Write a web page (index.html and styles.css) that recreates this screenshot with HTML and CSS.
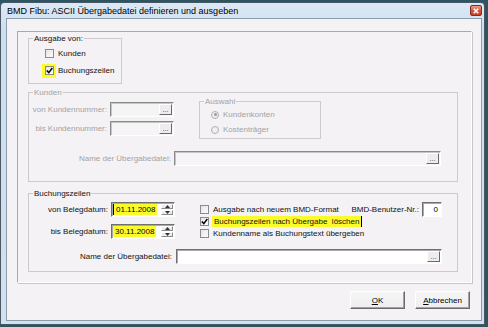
FILE: index.html
```html
<!DOCTYPE html>
<html lang="de">
<head>
    <meta charset="UTF-8">
    <title>BMD Fibu: ASCII Übergabedatei definieren und ausgeben</title>
    <link rel="stylesheet" href="styles.css">
</head>
<body>
    <div class="window">
        <div class="titlebar">
            <span class="title">BMD Fibu: ASCII Übergabedatei definieren und ausgeben</span>
            <span class="close-btn">
                <svg width="6" height="6" viewBox="0 0 6 6"><path d="M0.8 0.8 L5.2 5.2 M5.2 0.8 L0.8 5.2" stroke="#fff" stroke-width="1.6"/></svg>
            </span>
        </div>

        <div class="client">
            <div class="panel">

                <!-- Ausgabe von -->
                <fieldset class="group group-ausgabe">
                    <legend>Ausgabe von:</legend>
                    <div class="ausgabe-rows">
                        <div class="check-row tall">
                            <span class="cb-wrap"><span class="checkbox"></span></span>
                            <span class="check-label">Kunden</span>
                        </div>
                        <div class="check-row tall">
                            <span class="cb-wrap marked">
                                <span class="checkbox">
                                    <svg width="7" height="7" viewBox="0 0 7 7"><path d="M0.8 3.4 L2.8 5.6 L6.3 1" fill="none" stroke="#000" stroke-width="1.5"/></svg>
                                </span>
                            </span>
                            <span class="check-label">Buchungszeilen</span>
                        </div>
                    </div>
                </fieldset>

                <!-- Kunden (disabled) -->
                <fieldset class="group group-wide group-kunden disabled">
                    <legend>Kunden</legend>
                    <div class="kunden-top">
                        <div class="field-col kunden-fields">
                            <div class="field-row">
                                <label class="field-label w-kunde">von Kundennummer:</label>
                                <span class="input input-short"><span class="input-text"></span><span class="dots-btn">...</span></span>
                            </div>
                            <div class="field-row">
                                <label class="field-label w-kunde">bis Kundennummer:</label>
                                <span class="input input-short"><span class="input-text"></span><span class="dots-btn">...</span></span>
                            </div>
                        </div>
                        <fieldset class="group group-auswahl">
                            <legend>Auswahl</legend>
                            <div class="radio-rows">
                                <div class="radio-row"><span class="radio checked"></span><span>Kundenkonten</span></div>
                                <div class="radio-row"><span class="radio"></span><span>Kostenträger</span></div>
                            </div>
                        </fieldset>
                    </div>
                    <div class="field-row name-row kunden-name">
                        <label class="field-label w-name">Name der Übergabedatei:</label>
                        <span class="input input-long"><span class="input-text"></span><span class="dots-btn">...</span></span>
                    </div>
                </fieldset>

                <!-- Buchungszeilen -->
                <fieldset class="group group-wide group-buchung">
                    <legend>Buchungszeilen</legend>
                    <div class="buchung-top">
                        <div class="field-col date-fields">
                            <div class="field-row">
                                <label class="field-label w-datum">von Belegdatum:</label>
                                <span class="input input-short">
                                    <span class="input-text"><span class="hl caret-left">01.11.2008</span></span>
                                    <span class="spin">
                                        <span class="spin-half"><svg width="5" height="3" viewBox="0 0 5 3"><path d="M0 3 L2.5 0 L5 3 Z" fill="#333"/></svg></span>
                                        <span class="spin-half"><svg width="5" height="3" viewBox="0 0 5 3"><path d="M0 0 L2.5 3 L5 0 Z" fill="#333"/></svg></span>
                                    </span>
                                </span>
                            </div>
                            <div class="field-row">
                                <label class="field-label w-datum">bis Belegdatum:</label>
                                <span class="input input-short">
                                    <span class="input-text"><span class="hl">30.11.2008</span></span>
                                    <span class="spin">
                                        <span class="spin-half"><svg width="5" height="3" viewBox="0 0 5 3"><path d="M0 3 L2.5 0 L5 3 Z" fill="#333"/></svg></span>
                                        <span class="spin-half"><svg width="5" height="3" viewBox="0 0 5 3"><path d="M0 0 L2.5 3 L5 0 Z" fill="#333"/></svg></span>
                                    </span>
                                </span>
                            </div>
                        </div>
                        <div class="check-col">
                            <div class="check-row">
                                <span class="checkbox"></span>
                                <span class="check-label">Ausgabe nach neuem BMD-Format</span>
                                <span class="benutzer">
                                    <label>BMD-Benutzer-Nr.:</label>
                                    <span class="input input-nr"><span class="input-text">0</span></span>
                                </span>
                            </div>
                            <div class="check-row">
                                <span class="checkbox">
                                    <svg width="7" height="7" viewBox="0 0 7 7"><path d="M0.8 3.4 L2.8 5.6 L6.3 1" fill="none" stroke="#000" stroke-width="1.5"/></svg>
                                </span>
                                <span class="check-label hl caret-right">Buchungszeilen nach Übergabe&nbsp; löschen</span>
                            </div>
                            <div class="check-row">
                                <span class="checkbox"></span>
                                <span class="check-label">Kundenname als Buchungstext übergeben</span>
                            </div>
                        </div>
                    </div>
                    <div class="field-row name-row buchung-name">
                        <label class="field-label w-name2">Name der Übergabedatei:</label>
                        <span class="input input-long2"><span class="input-text"></span><span class="dots-btn">...</span></span>
                    </div>
                </fieldset>
            </div>

            <div class="button-row">
                <button class="btn"><u>O</u>K</button>
                <button class="btn"><u>A</u>bbrechen</button>
            </div>
        </div>
    </div>
</body>
</html>
```

FILE: styles.css
```css
* {
    box-sizing: border-box;
}

body {
    margin: 0;
    background-color: #2b5661;
    font-family: "Liberation Sans", Arial, sans-serif;
    font-size: 8px;
    color: #111;
}

/* window frame */
.window {
    width: 485px;
    height: 323px;
    margin-top: 2px;
    border: 1px solid #4a5866;
    border-radius: 4px 4px 0 0;
    background: linear-gradient(#dce8f5, #cddeef 30px, #d2e1f0);
    padding: 0 2px 3px 5px;
    display: flex;
    flex-direction: column;
}

.titlebar {
    height: 15px;
    display: flex;
    align-items: center;
    justify-content: space-between;
}

.title {
    font-size: 9px;
    padding-left: 1px;
    color: #000;
}

.close-btn {
    width: 12px;
    height: 11px;
    border: 1px solid #7d2f22;
    border-radius: 2px;
    background: linear-gradient(#e9a08c, #d5563c 50%, #c4432a);
    display: flex;
    align-items: center;
    justify-content: center;
}

.client {
    flex: 1;
    border: 1px solid #8b9cab;
    background-color: #f4f2f4;
    padding: 12px 11px 0 10px;
    display: flex;
    flex-direction: column;
}

.panel {
    width: 455px;
    height: 252px;
    border: 1px solid;
    border-color: #aba7ab #fff #fff #aba7ab;
    box-shadow: 1px 1px 0 #c9c5c9;
    padding: 2px 0 0 10px;
}

/* group boxes */
.group {
    margin: 0;
    padding: 0;
    min-width: 0;
    border: 1px solid #cdc9cd;
}

.group legend {
    margin-left: 4px;
    padding: 0 1px;
    line-height: 9px;
}

.group-ausgabe {
    width: 94px;
    height: 50px;
}

.group-wide {
    width: 430px;
}

.group-kunden {
    height: 94px;
    margin-top: 4px;
}

.group-buchung {
    height: 83px;
    margin-top: 7px;
}

.disabled {
    color: #a3a3a3;
}

.ausgabe-rows {
    padding-top: 2px;
}

.check-row {
    display: flex;
    align-items: center;
    height: 12px;
    white-space: nowrap;
}

.check-row.tall {
    height: 17px;
}

.cb-wrap {
    width: 14px;
    height: 14px;
    margin-left: 13px;
    display: flex;
    align-items: center;
    justify-content: center;
}

.cb-wrap.marked {
    background-color: #fbfb2c;
}

.cb-wrap + .check-label {
    margin-left: 1px;
}

.checkbox {
    width: 9px;
    height: 9px;
    border: 1px solid #8a8b8c;
    background: linear-gradient(135deg, #e4e4e4, #fdfdfd);
    display: flex;
    align-items: center;
    justify-content: center;
    flex-shrink: 0;
}

.check-label {
    line-height: 11px;
    padding: 0 1px;
}

.checkbox + .check-label {
    margin-left: 3px;
}

/* fields */
.field-col {
    display: flex;
    flex-direction: column;
}

.field-row {
    display: flex;
    align-items: center;
    height: 15px;
    white-space: nowrap;
}

.field-label {
    text-align: right;
    margin-right: 3px;
}

.w-kunde { width: 78px; }
.w-datum { width: 79px; }
.w-name { width: 142px; }
.w-name2 { width: 143px; margin-right: 4px; }

.input {
    height: 15px;
    display: flex;
    border: 1px solid;
    border-color: #6f6f6f #fff #fff #6f6f6f;
    box-shadow: inset 1px 1px 0 #a9a9a9;
    background-color: #fff;
}

.disabled .input {
    background-color: #f6f5f6;
    border-color: #8a8a8a #fff #fff #8a8a8a;
    box-shadow: inset 1px 1px 0 #c6c6c6;
}

.input-short { width: 64px; }
.input-long { width: 267px; }
.input-long2 { width: 266px; }
.input-nr { width: 20px; }

.input-text {
    flex: 1;
    display: flex;
    align-items: center;
    padding-left: 1px;
    color: #000;
}

.input-nr .input-text {
    justify-content: flex-end;
    padding-right: 3px;
}

.dots-btn {
    width: 13px;
    margin: 1px 1px 1px 0;
    border: 1px solid;
    border-color: #fff #6a6a6a #6a6a6a #fff;
    background-color: #eeecee;
    font-size: 7px;
    line-height: 9px;
    text-align: center;
    color: #333;
}

.spin {
    width: 12px;
    margin: 1px 1px 1px 0;
    display: flex;
    flex-direction: column;
    gap: 1px;
}

.spin-half {
    flex: 1;
    border: 1px solid;
    border-color: #fff #8a8a8a #8a8a8a #fff;
    background-color: #eeecee;
    display: flex;
    align-items: center;
    justify-content: center;
}

.hl {
    background-color: #fbfb2c;
    line-height: 11px;
    padding: 0 2px;
}

.caret-left {
    border-left: 1px solid #000;
}

.caret-right {
    border-right: 1px solid #000;
}

/* Kunden group */
.kunden-top {
    display: flex;
    align-items: flex-start;
}

.kunden-fields {
    margin-top: 5px;
    gap: 4px;
}

.group-auswahl {
    width: 122px;
    height: 42px;
    margin-left: 25px;
}

.radio-rows {
    padding: 1px 0 0 11px;
}

.radio-row {
    display: flex;
    align-items: center;
    height: 15px;
    gap: 4px;
}

.radio {
    width: 8px;
    height: 8px;
    border-radius: 50%;
    border: 1px solid #b0b0b0;
    background-color: #f0eff0;
    display: flex;
    align-items: center;
    justify-content: center;
}

.radio.checked::after {
    content: "";
    width: 3px;
    height: 3px;
    border-radius: 50%;
    background-color: #9a9a9a;
}

.kunden-name {
    margin-top: 12px;
}

/* Buchungszeilen group */
.buchung-top {
    display: flex;
    align-items: flex-start;
}

.date-fields {
    margin-top: 4px;
    gap: 7px;
}

.check-col {
    flex: 1;
    margin-left: 25px;
    padding: 5px 15px 0 0;
}

.benutzer {
    margin-left: auto;
    display: flex;
    align-items: center;
    gap: 3px;
}

.buchung-name {
    margin-top: 10px;
}

/* buttons */
.button-row {
    margin-top: 8px;
    display: flex;
    justify-content: flex-end;
    gap: 10px;
}

.btn {
    width: 55px;
    height: 18px;
    padding: 0;
    border: 1px solid;
    border-color: #fff #6a6a6a #6a6a6a #fff;
    box-shadow: inset -1px -1px 0 #a3a3a3;
    background: linear-gradient(#f7f6f7, #efeeef);
    font-family: "Liberation Sans", Arial, sans-serif;
    font-size: 8px;
    color: #000;
}
```
